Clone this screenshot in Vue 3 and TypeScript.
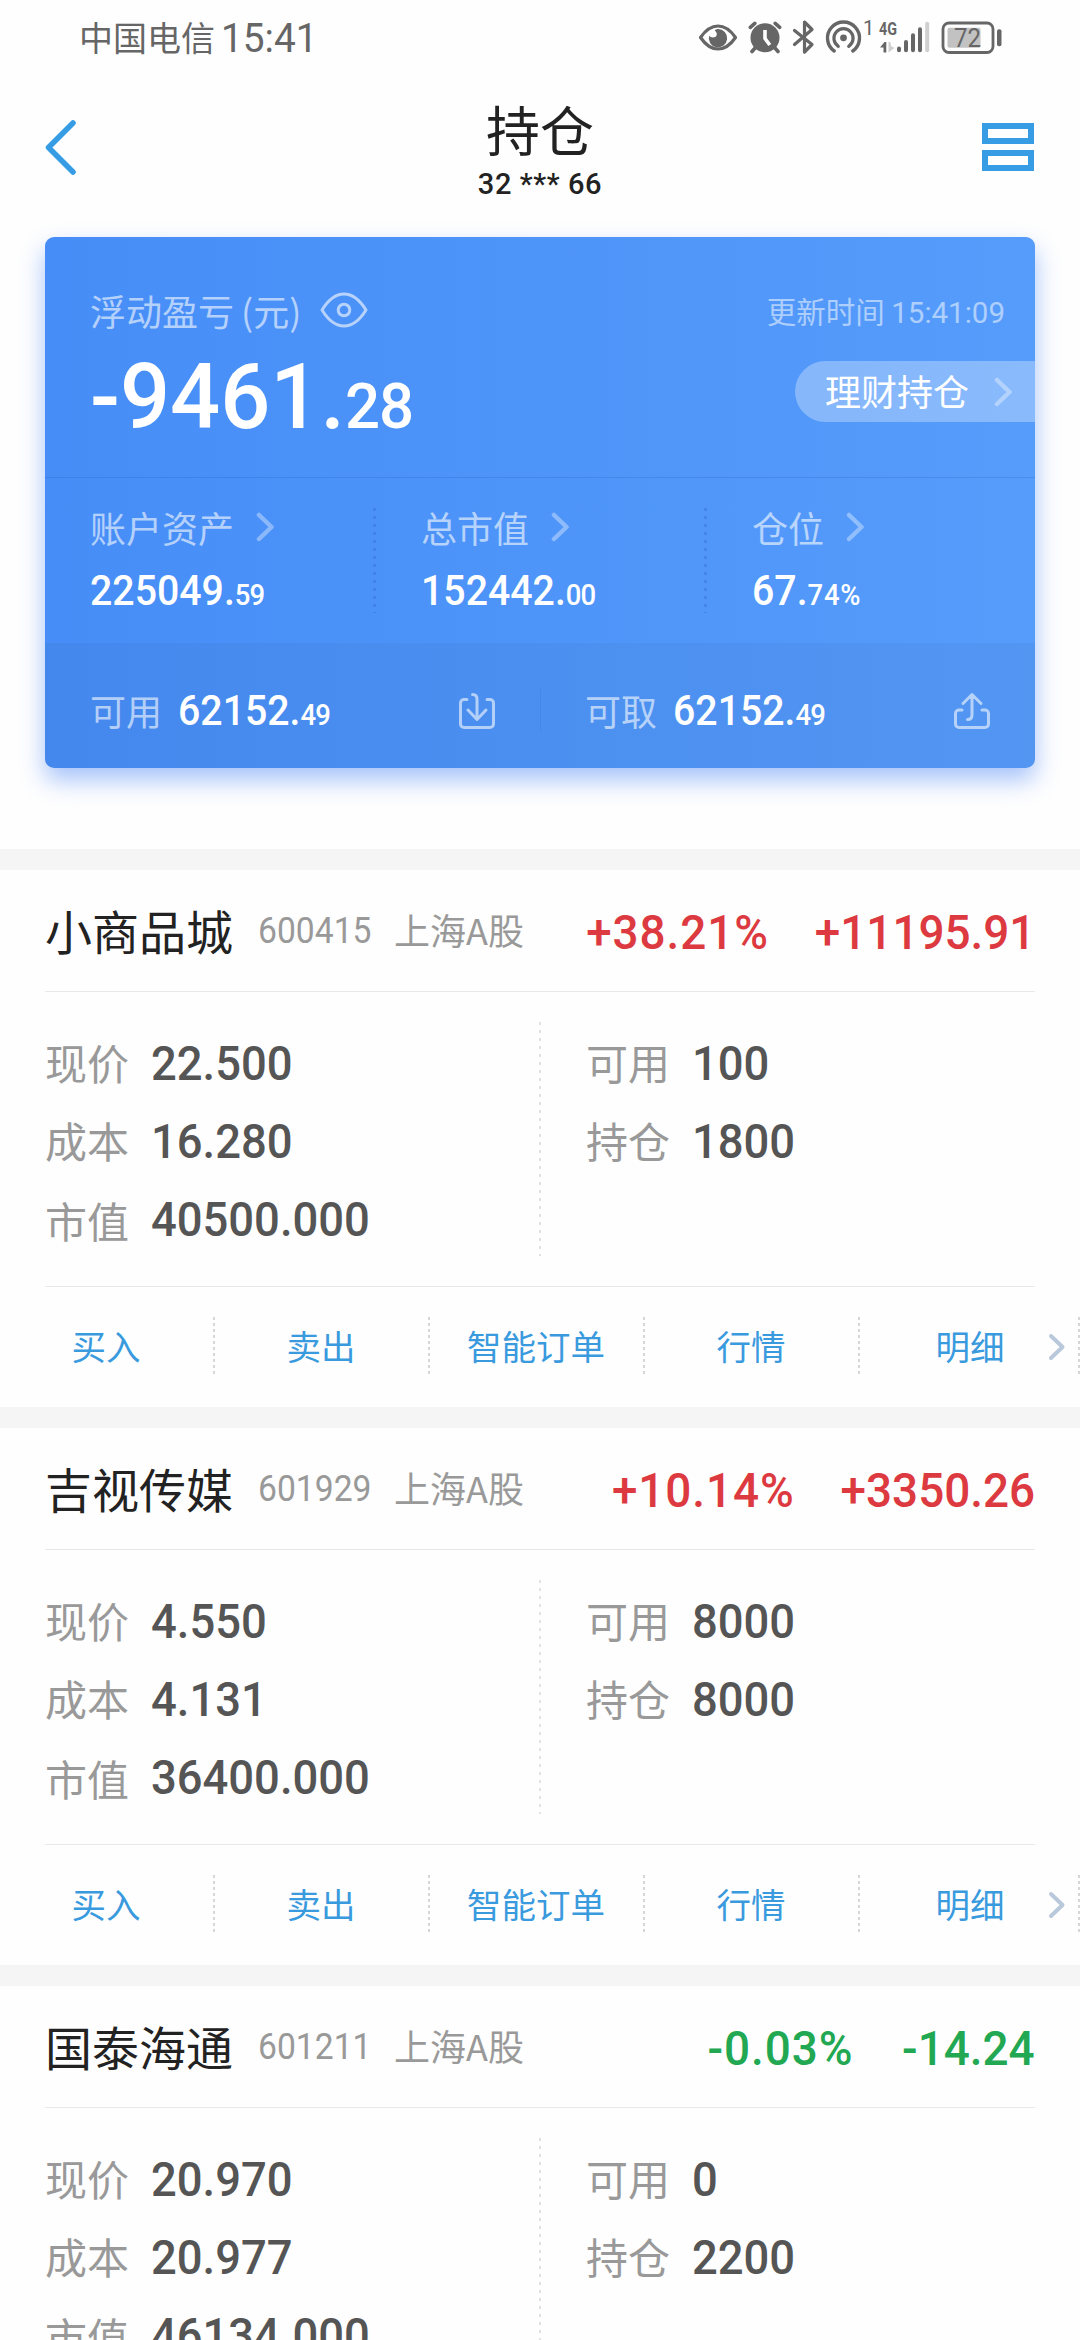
<script setup lang="ts">
interface Holding {
  name: string
  code: string
  market: string
  rate: string
  profit: string
  trend: 'up' | 'down'
  left: [string, string][]
  right: [string, string][]
}

const holdings: Holding[] = [
  {
    name: '小商品城', code: '600415', market: '上海A股', rate: '+38.21%', profit: '+11195.91', trend: 'up',
    left: [['现价', '22.500'], ['成本', '16.280'], ['市值', '40500.000']],
    right: [['可用', '100'], ['持仓', '1800']],
  },
  {
    name: '吉视传媒', code: '601929', market: '上海A股', rate: '+10.14%', profit: '+3350.26', trend: 'up',
    left: [['现价', '4.550'], ['成本', '4.131'], ['市值', '36400.000']],
    right: [['可用', '8000'], ['持仓', '8000']],
  },
  {
    name: '国泰海通', code: '601211', market: '上海A股', rate: '-0.03%', profit: '-14.24', trend: 'down',
    left: [['现价', '20.970'], ['成本', '20.977'], ['市值', '46134.000']],
    right: [['可用', '0'], ['持仓', '2200']],
  },
]

const totals = [
  { label: '账户资产', int: '225049.', dec: '59' },
  { label: '总市值', int: '152442.', dec: '00' },
  { label: '仓位', int: '67.', dec: '74%' },
]

const actions = ['买入', '卖出', '智能订单', '行情', '明细']
</script>

<template>
  <div class="page">
    <div class="status">
      <span class="carrier">中国电信</span>
      <span class="clock num">15:41</span>
      <svg class="status-icons" width="310" height="50" viewBox="696 12 310 50" fill="none" stroke="#666" stroke-linecap="round" stroke-linejoin="round">
        <path d="M700.500 36.500C706 28.500 711.500 25 718 25s12 3.500 17.500 11.500C730 44.500 724.500 48 718 48s-12-3.500-17.500-11.500z" stroke-width="3.200" />
        <path d="M718 28a9.200 9.200 0 1 1-8.800 6.500c1 2.500 6.500 3 7.500-.500.600-2.300-1-3.500-2-4.500 1-1 2-1.500 3.300-1.500z" fill="#666" stroke="none" />
        <circle cx="765" cy="36.800" r="14.500" fill="#666" stroke="none" />
        <path d="M750.300 26.300l4.500-4M779.700 26.300l-4.500-4M755.500 46.500l-3.500 4M774.500 46.500l3.500 4" stroke-width="3.600" />
        <path d="M765 29v8.500l4.800 6.500" stroke="#fff" stroke-width="3.600" stroke-linecap="butt" />
        <path d="M794.500 29.500L812 43.500l-7.500 7.500V21l7.500 7.500-17.500 15" stroke-width="3.200" />
        <circle cx="843.500" cy="36.800" r="3.400" fill="#666" stroke="none" />
        <path d="M838.300 45.300a9.600 9.600 0 1 1 10.400 0" stroke-width="3.200" />
        <path d="M834.200 50a16 16 0 1 1 18.600 0" stroke-width="3.400" />
        <text x="863" y="34.300" class="tiny" font-size="20">1</text>
        <text x="879" y="34.300" class="tiny bold" font-size="18.500" textLength="18" lengthAdjust="spacingAndGlyphs">4G</text>
        <path d="M880 46.500l4.500-5.500h1.800v10.500h-2.800v-5z" fill="#666" stroke="none" />
        <path d="M888.500 41h2l.500 4 3.500 2-6 4.500z" fill="#d0d0d0" stroke="none" />
        <path d="M899 47.500v1.800M906 41v8.300M913 34.300v15M920 28.300v21" stroke-width="4" />
        <path d="M927.200 22.700v26.600" stroke="#d0d0d0" stroke-width="4" />
        <rect x="947.500" y="26.700" width="33" height="20" rx="2" fill="#c2c2c2" stroke="none" />
        <rect x="943" y="22" width="50" height="29.500" rx="6" stroke-width="2.800" />
        <rect x="997" y="28.300" width="4.500" height="17" rx="2" fill="#666" stroke="none" />
        <text x="954" y="45.700" class="tiny" font-size="25" textLength="27" lengthAdjust="spacingAndGlyphs">72</text>
      </svg>
    </div>

    <header class="header">
      <svg class="back" width="32" height="58" viewBox="45 118 32 58" fill="none" stroke="#369de5" stroke-width="5.500" stroke-linecap="round" stroke-linejoin="round">
        <path d="M73 123L48.500 147.500 73 172" />
      </svg>
      <div class="titles">
        <h1>持仓</h1>
        <div class="account num">32 *** 66</div>
      </div>
      <svg class="menu" width="52" height="48" viewBox="0 0 52 48" fill="none" stroke="#369de5" stroke-width="6">
        <rect x="3" y="3" width="46" height="15" />
        <rect x="3" y="30" width="46" height="15" />
      </svg>
    </header>

    <section class="card">
      <div class="pnl">
        <div class="pnl-main">
          <div class="label pnl-label">
            <span>浮动盈亏</span><span class="unit">(元)</span>
            <svg width="48" height="36" viewBox="0 0 48 36" fill="none" stroke="currentColor" stroke-width="3">
              <path d="M2 18C8.500 7.500 15.500 2 24 2s15.500 5.500 22 16C39.500 28.500 32.500 34 24 34S8.500 28.500 2 18z" stroke-linejoin="round" />
              <circle cx="24" cy="18" r="5.800" />
            </svg>
          </div>
          <div class="big num">-9461.<small>28</small></div>
        </div>
        <div class="pnl-side">
          <div class="updated">更新时间 <span class="num">15:41:09</span></div>
          <div class="pill">
            <span>理财持仓</span>
            <svg class="chev" width="19" height="30" viewBox="0 0 19 30"><path d="M3 3l12.500 12L3 27" /></svg>
          </div>
        </div>
      </div>
      <div class="totals">
        <div v-for="t in totals" :key="t.label" class="total">
          <div class="label">
            {{ t.label }}
            <svg class="chev" width="19" height="30" viewBox="0 0 19 30"><path d="M3 3l12.500 12L3 27" /></svg>
          </div>
          <div class="amount num">{{ t.int }}<small>{{ t.dec }}</small></div>
        </div>
      </div>
      <div class="cash">
        <div class="cash-item">
          <span class="label">可用</span>
          <span class="amount num">62152.<small>49</small></span>
          <svg class="transfer" width="36" height="38" viewBox="0 0 36 38">
            <path d="M8 7.500H5a3.500 3.500 0 0 0-3.500 3.500v21A3.500 3.500 0 0 0 5 35.500h26a3.500 3.500 0 0 0 3.500-3.500V11A3.500 3.500 0 0 0 31 7.500h-3M13.500 2.500c3 0 4.500 1.500 4.500 4.500v20M9 18l9 9.500 9-9.500" />
          </svg>
        </div>
        <div class="cash-item">
          <span class="label">可取</span>
          <span class="amount num">62152.<small>49</small></span>
          <svg class="transfer" width="36" height="38" viewBox="0 0 36 38">
            <path d="M8 18H5a3.500 3.500 0 0 0-3.500 3.500V32A3.500 3.500 0 0 0 5 35.500h26a3.500 3.500 0 0 0 3.500-3.500V21.500A3.500 3.500 0 0 0 31 18h-3M13.500 27.500c3 0 4.500-1.500 4.500-4.500V3M9 11.500L18 2.500l9 9" />
          </svg>
        </div>
      </div>
    </section>

    <section v-for="h in holdings" :key="h.code" class="holding">
      <div class="head">
        <span class="name">{{ h.name }}</span>
        <span class="code num">{{ h.code }}</span>
        <span class="market">{{ h.market }}</span>
        <span class="result num" :class="h.trend"><span class="rate">{{ h.rate }}</span><span>{{ h.profit }}</span></span>
      </div>
      <div class="detail">
        <div v-for="(col, i) in [h.left, h.right]" :key="i" class="col">
          <div v-for="[k, v] in col" :key="k" class="line">
            <span class="key">{{ k }}</span><span class="val num">{{ v }}</span>
          </div>
        </div>
      </div>
      <div class="actions">
        <div v-for="a in actions" :key="a" class="action">{{ a }}</div>
        <svg class="more" width="20" height="30" viewBox="0 0 20 30" fill="none" stroke="#b9c8da" stroke-width="4" stroke-linecap="round" stroke-linejoin="round">
          <path d="M4 4l11.500 11L4 26" />
        </svg>
      </div>
    </section>
  </div>
</template>

<style>
body {
  margin: 0;
  background: #fefefe;
}
</style>

<style scoped>
.page {
  width: 1080px;
  height: 2340px;
  overflow: hidden;
  background: #fefefe;
  font-family: 'Noto Sans CJK SC', sans-serif;
  color: #222;
  white-space: nowrap;
}
.num {
  font-family: Roboto, 'Noto Sans CJK SC', sans-serif;
  font-weight: 500;
  transform-origin: left center;
}
.status {
  height: 75px;
  display: flex;
  align-items: center;
  color: #666;
}
.carrier {
  margin-left: 79px;
  width: 142px;
  font-size: 34px;
  line-height: 70px;
  margin-top: -2px;
}
.clock {
  font-size: 40px;
  font-weight: 400;
  transform: scaleX(0.97);
  width: 100px;
  line-height: 76px;
  margin-top: 2px;
}
.status-icons {
  margin-left: auto;
  margin-right: 74px;
}
.tiny {
  fill: #666;
  stroke: none;
  font-family: Roboto, sans-serif;
}
.bold {
  font-weight: 700;
}
.header {
  height: 162px;
  display: grid;
  grid-template-columns: 200px 1fr 200px;
}
.back {
  margin: 43px 0 0 45px;
}
.titles {
  text-align: center;
}
h1 {
  margin: 24px 0 0;
  font-size: 54px;
  font-weight: 400;
  line-height: 60px;
}
.account {
  font-size: 29px;
  line-height: 34px;
  margin-top: 8px;
  letter-spacing: 0.6px;
  transform-origin: center;
}
.menu {
  justify-self: end;
  margin: 48px 46px 0 0;
}
.card {
  margin: 0 45px 81px;
  height: 531px;
  border-radius: 9px;
  background: linear-gradient(90deg, #468df7, #569cfb);
  box-shadow: 0 12px 24px rgba(70, 130, 247, 0.48);
  color: #fff;
  display: flex;
  flex-direction: column;
}
.label {
  font-size: 36px;
  line-height: 40px;
  color: rgba(255, 255, 255, 0.6);
  display: flex;
  align-items: center;
}
.pnl {
  height: 240px;
  border-bottom: 1px solid rgba(30, 80, 170, 0.2);
  display: flex;
  justify-content: space-between;
}
.pnl-main {
  padding: 53px 0 0 45px;
}
.unit {
  margin-left: 7px;
}
.pnl-label svg {
  margin-left: 19px;
}
.big {
  font-size: 90px;
  line-height: 100px;
  margin-top: 18px;
  transform: scaleX(0.98);
}
small {
  font-size: 0.7em;
  letter-spacing: -1px;
}
.pnl-side {
  display: flex;
  flex-direction: column;
  align-items: flex-end;
}
.updated {
  margin: 53px 30px 0 0;
  font-size: 29.5px;
  line-height: 40px;
  color: rgba(255, 255, 255, 0.53);
}
.updated .num {
  font-weight: 400;
}
.pill {
  margin-top: 28px;
  width: 240px;
  height: 61px;
  border-radius: 31px 0 0 31px;
  background: rgba(255, 255, 255, 0.3);
  box-sizing: border-box;
  padding-left: 30px;
  display: flex;
  align-items: center;
  font-size: 36px;
  line-height: 58px;
}
.pill span {
  margin-top: -4px;
}
.chev {
  fill: none;
  stroke: rgba(255, 255, 255, 0.36);
  stroke-width: 4.5px;
  stroke-linecap: round;
  stroke-linejoin: round;
  margin-left: 22px;
}
.pill .chev {
  margin-left: 25px;
}
.totals {
  height: 165px;
  display: flex;
}
.total {
  flex: 0 0 331px;
  box-sizing: border-box;
  padding: 29px 0 0 45px;
  background: repeating-linear-gradient(rgba(30, 80, 170, 0.24) 0 3px, transparent 3px 8px) right 30px / 3px 105px no-repeat;
}
.total:last-child {
  flex-basis: 328px;
  background: none;
}
.total:last-child small {
  letter-spacing: 0.8px;
}
.amount {
  font-size: 42px;
  line-height: 50px;
  transform: scaleX(0.935);
  margin-top: 19px;
}
.cash {
  height: 125px;
  display: flex;
  border-radius: 0 0 9px 9px;
  background: linear-gradient(rgba(30, 80, 170, 0.13), rgba(30, 80, 170, 0.13)) center 46px / 1px 42px no-repeat, rgba(40, 80, 120, 0.065);
}
.cash-item {
  width: 495px;
  box-sizing: border-box;
  height: 125px;
  padding: 11px 45px 0 45px;
  display: flex;
  align-items: center;
}
.cash-item .label {
  margin-top: -2px;
}
.cash-item .amount {
  margin: 4px 0 0 16px;
}
.transfer {
  margin-left: auto;
  fill: none;
  stroke: rgba(255, 255, 255, 0.58);
  stroke-width: 3px;
  stroke-linecap: round;
  stroke-linejoin: round;
}
.holding {
  height: 537px;
  border-top: 21px solid #f5f5f5;
}
.head {
  margin: 0 45px;
  height: 121px;
  border-bottom: 1px solid #e8e8e8;
  display: flex;
  align-items: center;
}
.name {
  font-size: 47px;
  line-height: 60px;
  margin-top: -2px;
  width: 213px;
}
.code {
  font-size: 36px;
  font-weight: 400;
  line-height: 50px;
  color: #999;
  width: 136px;
  transform: scaleX(0.935);
}
.market {
  font-size: 36px;
  line-height: 50px;
  margin-top: -4px;
  color: #999;
}
.result {
  margin-left: auto;
  font-size: 48px;
  line-height: 60px;
  margin-top: 5px;
  transform: scaleX(0.955);
  transform-origin: right center;
  display: flex;
  gap: 48px;
}
.rate {
  letter-spacing: 1px;
}
.up {
  color: #dc3a40;
}
.down {
  color: #22a852;
  gap: 51px;
}
.detail {
  height: 262px;
  padding: 32px 45px 0;
  display: flex;
  background: repeating-linear-gradient(#e2e2e2 0 3px, transparent 3px 8px) center 30px / 2px 234px no-repeat;
}
.col {
  width: 495px;
}
.col + .col {
  box-sizing: border-box;
  padding-left: 46px;
}
.line {
  height: 78px;
  display: flex;
  align-items: center;
}
.key {
  width: 106px;
  font-size: 42px;
  line-height: 60px;
  margin-top: -3px;
  color: #999;
}
.line:nth-child(3) .key {
  margin-top: 2px;
}
.val {
  font-size: 48px;
  line-height: 60px;
  margin-top: 2px;
  color: #555;
  transform: scaleX(0.945);
}
.actions {
  position: relative;
  height: 120px;
  display: flex;
}
.actions::before {
  content: '';
  position: absolute;
  left: 45px;
  right: 45px;
  top: 0;
  height: 1px;
  background: #e8e8e8;
}
.action {
  flex: 0 0 215px;
  box-sizing: border-box;
  padding-right: 3px;
  text-align: center;
  font-size: 34.5px;
  line-height: 119px;
  color: #3a9ade;
  background: repeating-linear-gradient(#d6d6d6 0 3px, transparent 3px 6px) right 31px / 2px 57px no-repeat;
}
.action:nth-child(5) {
  flex-basis: 220px;
  padding-right: 0;
}
.more {
  position: absolute;
  left: 1047px;
  top: 46px;
}
</style>
